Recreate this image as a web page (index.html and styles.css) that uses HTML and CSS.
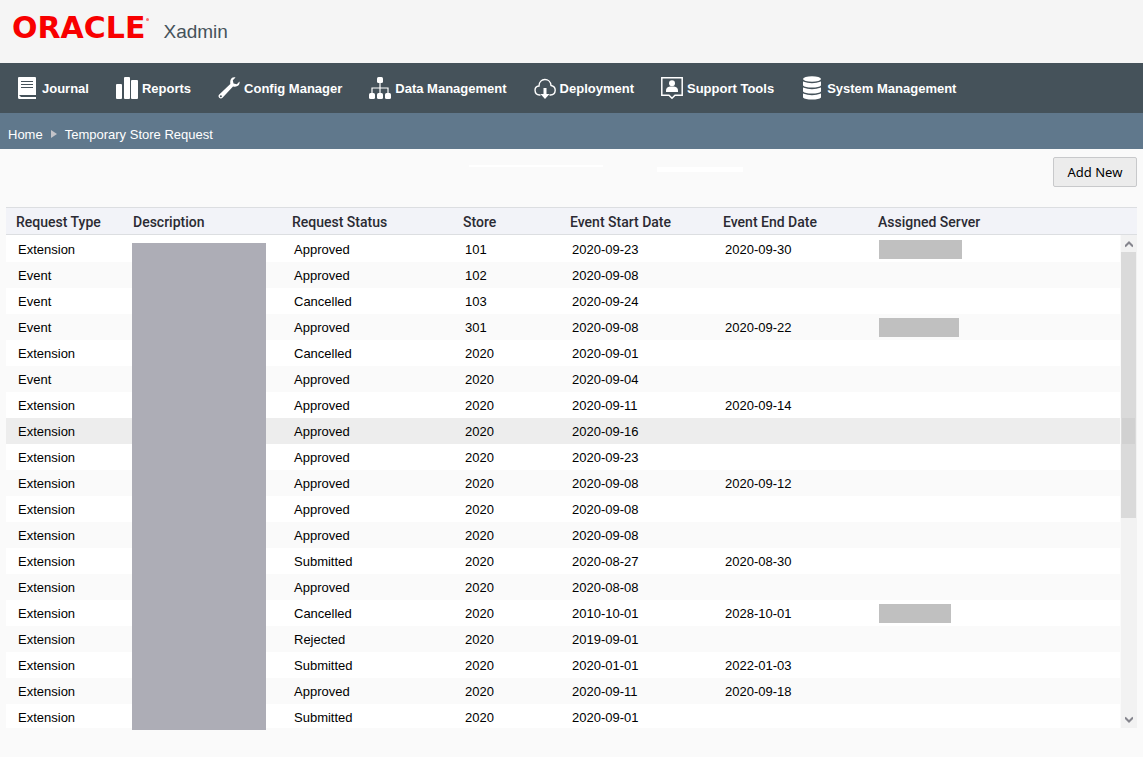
FILE: index.html
```html
<!DOCTYPE html>
<html lang="en">
<head>
  <meta charset="UTF-8" />
  <meta name="viewport" content="width=device-width, initial-scale=1.0"/>
  <title>Xadmin - Temporary Store Request</title>
  <link rel="stylesheet" href="styles.css">
</head>
<body>

  <!-- Header -->
  <header class="header">
    <span class="logo">ORACLE<span class="logo-dot"></span></span>
    <span class="app-name">Xadmin</span>
  </header>

  <!-- Main menu -->
  <nav class="menu">
    <a class="menu-item" href="#">
      <svg class="icon" viewBox="0 0 22 22"><path fill="#fff" d="M3 0H19Q20 0 20 1V19H4.500V20H20V22H3.500Q2 22 2 20.500V1Q2 0 3 0Z"/><path stroke="#45525a" d="M5 4.500H17M5 7.500H17M5 10.500H17M3.500 18.500H20"/></svg>
      Journal
    </a>
    <a class="menu-item" href="#">
      <svg class="icon" viewBox="0 0 22 22"><g fill="#fff"><rect x="0" y="7" width="6" height="15" rx="1"/><rect x="8" y="0" width="6" height="22" rx="1"/><rect x="15" y="3" width="7" height="19" rx="1"/></g></svg>
      Reports
    </a>
    <a class="menu-item" href="#">
      <svg class="icon" viewBox="0 0 22 22"><path fill="#fff" d="M17.500 .5L14.800 3.200L15.500 6.500L18.800 7.200L21.500 4.500C22.200 7.500 19.800 10 16.500 9.700L15 9.500L4.500 20.800C2.500 22.800-.8 20 1 17.700L12.300 7L12.200 5C12.200 2 14.500-.3 17.500 .5Z"/><circle cx="2.900" cy="19.300" r="1" fill="#45525a"/></svg>
      Config Manager
    </a>
    <a class="menu-item" href="#">
      <svg class="icon" viewBox="0 0 22 22"><g fill="#fff"><rect x="8" y="0" width="6" height="6" rx="1.500"/><rect x="0" y="16" width="6" height="6" rx="1.500"/><rect x="8" y="16" width="6" height="6" rx="1.500"/><rect x="16" y="16" width="6" height="6" rx="1.500"/></g><path fill="none" stroke="#fff" stroke-width="1.200" d="M11 6V16M3 16V11H19V16"/></svg>
      Data Management
    </a>
    <a class="menu-item" href="#">
      <svg class="icon" viewBox="0 0 22 22"><path fill="none" stroke="#fff" stroke-width="1.400" d="M6.500 18H5.500C-.2 17.500-.5 9.500 5 9C5 .500 16.500 .500 17 8.500C22.800 9.500 22.500 17.500 16.500 18H15.500"/><path fill="#fff" d="M9.500 11H12.500V17H15.500L11 22L6.500 17H9.500Z"/></svg>
      Deployment
    </a>
    <a class="menu-item" href="#">
      <svg class="icon" viewBox="0 0 22 22"><path fill="none" stroke="#fff" stroke-width="1.500" d="M.8 .8H21.200V18.200H14L11 21.200L8 18.200H.8Z"/><circle cx="11" cy="6.200" r="3" fill="#fff"/><path fill="#fff" d="M5 15V13.500Q5 10 9 9.500H13Q17 10 17 13.500V15Z"/></svg>
      Support Tools
    </a>
    <a class="menu-item" href="#">
      <svg class="icon icon-tall" viewBox="0 0 22 24"><g fill="#fff"><ellipse cx="11" cy="3" rx="9" ry="2.800"/><path d="M2 5.500Q11 9 20 5.500V9.500Q18 11.500 11 11.500T2 9.500Z"/><path d="M2 11.500Q11 15 20 11.500V15.500Q18 17.500 11 17.500T2 15.500Z"/><path d="M2 17.500Q11 21 20 17.500V21.500Q18 23.500 11 23.500T2 21.500Z"/></g></svg>
      System Management
    </a>
  </nav>

  <!-- Breadcrumb -->
  <div class="breadcrumb">
    <a href="#">Home</a>
    <span class="arrow"></span>
    <span>Temporary Store Request</span>
  </div>

  <main class="content">
    <div class="toolbar">
      <span class="blank blank-long"></span>
      <span class="blank blank-short"></span>
      <button class="btn" type="button">Add New</button>
    </div>

    <!-- Requests -->
    <div class="grid">
      <table class="requests">
        <colgroup>
          <col class="col-type"><col class="col-description"><col class="col-status"><col class="col-store"><col class="col-start"><col class="col-end"><col>
        </colgroup>
        <thead>
          <tr><th>Request Type</th><th>Description</th><th>Request Status</th><th>Store</th><th>Event Start Date</th><th>Event End Date</th><th>Assigned Server</th></tr>
        </thead>
        <tbody>
          <tr><td>Extension</td><td></td><td>Approved</td><td>101</td><td>2020-09-23</td><td>2020-09-30</td><td><span class="masked masked-lg"></span></td></tr>
          <tr><td>Event</td><td></td><td>Approved</td><td>102</td><td>2020-09-08</td><td></td><td></td></tr>
          <tr><td>Event</td><td></td><td>Cancelled</td><td>103</td><td>2020-09-24</td><td></td><td></td></tr>
          <tr><td>Event</td><td></td><td>Approved</td><td>301</td><td>2020-09-08</td><td>2020-09-22</td><td><span class="masked masked-md"></span></td></tr>
          <tr><td>Extension</td><td></td><td>Cancelled</td><td>2020</td><td>2020-09-01</td><td></td><td></td></tr>
          <tr><td>Event</td><td></td><td>Approved</td><td>2020</td><td>2020-09-04</td><td></td><td></td></tr>
          <tr><td>Extension</td><td></td><td>Approved</td><td>2020</td><td>2020-09-11</td><td>2020-09-14</td><td></td></tr>
          <tr class="selected"><td>Extension</td><td></td><td>Approved</td><td>2020</td><td>2020-09-16</td><td></td><td></td></tr>
          <tr><td>Extension</td><td></td><td>Approved</td><td>2020</td><td>2020-09-23</td><td></td><td></td></tr>
          <tr><td>Extension</td><td></td><td>Approved</td><td>2020</td><td>2020-09-08</td><td>2020-09-12</td><td></td></tr>
          <tr><td>Extension</td><td></td><td>Approved</td><td>2020</td><td>2020-09-08</td><td></td><td></td></tr>
          <tr><td>Extension</td><td></td><td>Approved</td><td>2020</td><td>2020-09-08</td><td></td><td></td></tr>
          <tr><td>Extension</td><td></td><td>Submitted</td><td>2020</td><td>2020-08-27</td><td>2020-08-30</td><td></td></tr>
          <tr><td>Extension</td><td></td><td>Approved</td><td>2020</td><td>2020-08-08</td><td></td><td></td></tr>
          <tr><td>Extension</td><td></td><td>Cancelled</td><td>2020</td><td>2010-10-01</td><td>2028-10-01</td><td><span class="masked masked-sm"></span></td></tr>
          <tr><td>Extension</td><td></td><td>Rejected</td><td>2020</td><td>2019-09-01</td><td></td><td></td></tr>
          <tr><td>Extension</td><td></td><td>Submitted</td><td>2020</td><td>2020-01-01</td><td>2022-01-03</td><td></td></tr>
          <tr><td>Extension</td><td></td><td>Approved</td><td>2020</td><td>2020-09-11</td><td>2020-09-18</td><td></td></tr>
          <tr><td>Extension</td><td></td><td>Submitted</td><td>2020</td><td>2020-09-01</td><td></td><td></td></tr>
        </tbody>
      </table>
      <div class="description-mask"></div>
      <div class="scrollbar">
        <svg class="scroll-arrow" viewBox="0 0 8 8"><path d="M0 6.500L4 2.500L8 6.500"/></svg>
        <div class="thumb"><div class="grip"></div></div>
        <svg class="scroll-arrow scroll-down" viewBox="0 0 8 8"><path d="M0 1.500L4 5.500L8 1.500"/></svg>
      </div>
    </div>
  </main>

</body>
</html>
```

FILE: styles.css
```css
* {
  box-sizing: border-box;
}

body {
  margin: 0;
  background-color: #fafafa;
  color: #000;
  font-family: "Liberation Sans", Arial, sans-serif;
  font-size: 13px;
}

/* Header */
.header {
  display: flex;
  align-items: flex-start;
  gap: 9px;
  height: 63px;
  padding: 10px 12px;
  background-color: #f5f5f5;
}

.logo {
  position: relative;
  padding-right: 9px;
  color: #f80000;
  font-family: "DejaVu Sans", Verdana, sans-serif;
  font-size: 30px;
  font-weight: bold;
  line-height: 35px;
}

.logo-dot {
  position: absolute;
  top: 8px;
  right: 5px;
  width: 3px;
  height: 3px;
  border-radius: 50%;
  background-color: #fb7070;
}

.app-name {
  color: #45525a;
  font-size: 19px;
  line-height: 44px;
}

/* Menu */
.menu {
  display: flex;
  align-items: center;
  gap: 27px;
  height: 50px;
  padding: 0 16px;
  background-color: #45525a;
}

.menu-item {
  display: flex;
  align-items: center;
  gap: 4px;
  color: #fff;
  font-weight: bold;
  text-decoration: none;
  white-space: nowrap;
}

.icon {
  width: 22px;
  height: 22px;
}

.icon-tall {
  height: 24px;
}

/* Breadcrumb */
.breadcrumb {
  display: flex;
  align-items: center;
  gap: 8px;
  height: 36px;
  padding: 6px 8px 0;
  background-color: #60788c;
  color: #fff;
}

.breadcrumb a {
  color: #fff;
  text-decoration: none;
}

.arrow {
  border: 4px solid transparent;
  border-left: 6px solid #c3c3c8;
  border-right: 0;
}

/* Content */
.content {
  padding: 8px 6px;
}

.toolbar {
  position: relative;
  display: flex;
  justify-content: flex-end;
  margin-bottom: 20px;
}

.btn {
  width: 84px;
  height: 30px;
  padding: 0;
  border: 1px solid #c8c9cb;
  border-radius: 2px;
  background-color: #ececec;
  color: #000;
  font-family: "Noto Sans", Tahoma, sans-serif;
  font-size: 13px;
}

.blank {
  position: absolute;
  background-color: #fff;
}

.blank-long {
  top: 8px;
  left: 463px;
  width: 134px;
  height: 2px;
}

.blank-short {
  top: 10px;
  left: 651px;
  width: 86px;
  height: 5px;
}

/* Requests table */
.grid {
  position: relative;
}

.requests {
  width: 100%;
  table-layout: fixed;
  border-collapse: separate;
  border-spacing: 0;
}

.col-type { width: 117px; }
.col-description { width: 159px; }
.col-status { width: 171px; }
.col-store { width: 107px; }
.col-start { width: 153px; }
.col-end { width: 155px; }

.requests th {
  height: 28px;
  padding: 2px 10px 0;
  border-top: 1px solid #dcdee1;
  border-bottom: 1px solid #dcdee1;
  background-color: #f2f3f8;
  color: #2b2b33;
  font-family: Roboto, sans-serif;
  font-size: 14px;
  font-weight: 500;
  text-align: left;
  white-space: nowrap;
}

.requests td {
  height: 26px;
  padding: 1px 12px 0;
}

.requests tbody tr {
  background-color: #fff;
}

.requests tbody tr:nth-child(even) {
  background-color: #fafafa;
}

.requests tbody tr.selected {
  background-color: #ededed;
}

.requests tbody tr:first-child td {
  height: 27px;
  padding-top: 2px;
}

.requests tbody tr:last-child td {
  height: 24px;
  padding-top: 3px;
}

.masked {
  display: block;
  height: 19px;
  margin-left: -1px;
  background-color: #c0c0c0;
}

.masked-lg { width: 83px; }
.masked-md { width: 80px; }
.masked-sm { width: 72px; }

.description-mask {
  position: absolute;
  top: 36px;
  bottom: -2px;
  left: 126px;
  width: 134px;
  background-color: #adadb6;
}

/* Scrollbar */
.scrollbar {
  position: absolute;
  top: 28px;
  right: 0;
  bottom: 0;
  display: flex;
  flex-direction: column;
  align-items: center;
  width: 17px;
  border-left: 1px solid #fafafa;
  background-color: #f2f2f2;
}

.scroll-arrow {
  flex: none;
  width: 8px;
  height: 8px;
  margin: 5px 0 4px;
  fill: none;
  stroke: #85858d;
  stroke-width: 2;
}

.scroll-down {
  margin: auto 0 4px;
}

.thumb {
  display: flex;
  align-items: center;
  justify-content: center;
  align-self: flex-start;
  width: 15px;
  height: 54%;
  padding-top: 92px;
  background-color: #dadada;
}

.grip {
  width: 13px;
  height: 26px;
  background-image: radial-gradient(#cbcbcb 1px, #dadada 1px);
  background-size: 2px 2px;
  opacity: 0.6;
}
```
